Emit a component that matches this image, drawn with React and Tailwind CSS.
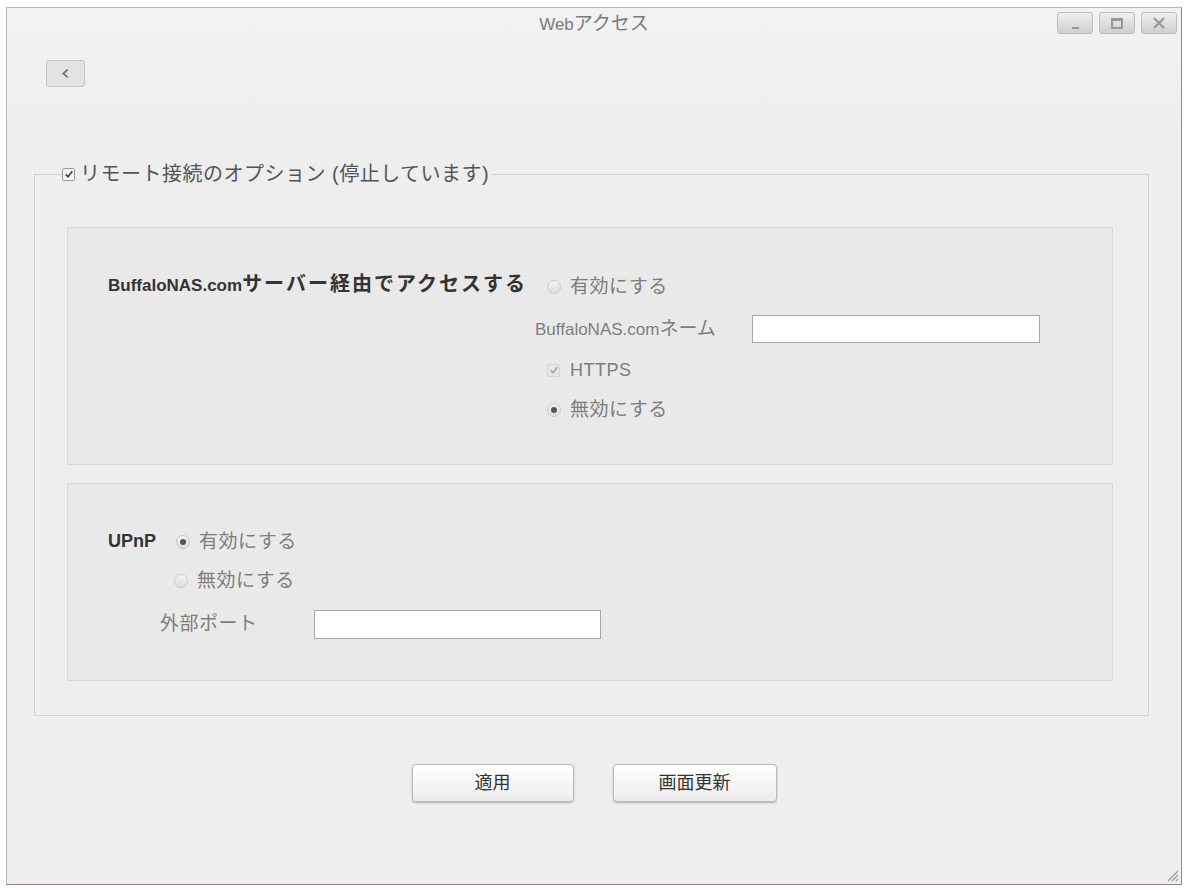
const font = { fontFamily: '"Liberation Sans", "Noto Sans CJK JP", sans-serif' };

const Radio = ({ checked }) => (
  <span className="inline-flex h-[14px] w-[14px] shrink-0 items-center justify-center rounded-full border border-[#c9c9c9] bg-gradient-to-b from-[#f4f4f4] to-[#dcdcdc]">
    {checked && <span className="h-[6px] w-[6px] rounded-full bg-[#555]" />}
  </span>
);

const Check = ({ dim }) => (
  <span
    className={`inline-flex h-[13px] w-[13px] shrink-0 items-center justify-center rounded-[2px] border ${
      dim ? "border-[#d6d6d6] bg-[#e6e6e6]" : "border-[#9a9a9a] bg-[#f4f4f4]"
    }`}
  >
    <svg viewBox="0 0 12 12" className="h-[10px] w-[10px]">
      <path
        d="M2 6.5 L4.8 9.2 L10 2.8"
        fill="none"
        stroke={dim ? "#a5a5a5" : "#444"}
        strokeWidth="2"
      />
    </svg>
  </span>
);

const WinBtn = ({ children }) => (
  <button className="flex h-[22px] w-[36px] items-center justify-center rounded-[3px] border border-[#bdbdbd] bg-gradient-to-b from-[#efefef] to-[#cfcfcf]">
    {children}
  </button>
);

// 選択肢の行 (ラジオ / チェック + 文字)
const Opt = ({ icon, children }) => (
  <div className="flex h-[26px] items-center">
    <span className="flex w-[23px] items-center">{icon}</span>
    <span className="text-[19px] leading-[26px] tracking-[0.5px]">{children}</span>
  </div>
);

export default function App() {
  return (
    <div className="min-h-screen bg-white pl-[6px] pt-[7px]" style={font}>
      <div className="relative flex h-[878px] w-[1176px] flex-col border border-[#b8b8b8] border-r-[#9b8585] border-b-[#9b7f7f] bg-[#eeeeee]">
        {/* header */}
        <div className="relative h-[115px] bg-gradient-to-b from-[#f2f2f2] to-[#efefef]">
          <div className="pt-[3px] text-center leading-[26px] text-[#7a7a7a]">
            <span className="text-[17px]">Web</span>
            <span className="text-[19px]">アクセス</span>
          </div>
          <div className="absolute right-[4px] top-[4px] flex gap-[6px]">
            <WinBtn>
              <span className="mt-[9px] h-[2px] w-[7px] bg-[#999]" />
            </WinBtn>
            <WinBtn>
              <span className="h-[11px] w-[12px] border-2 border-t-[3px] border-[#999]" />
            </WinBtn>
            <WinBtn>
              <svg viewBox="0 0 14 14" className="h-[14px] w-[14px]">
                <path d="M2 2 L12 12 M12 2 L2 12" stroke="#999" strokeWidth="2.4" />
              </svg>
            </WinBtn>
          </div>
          <button className="ml-[39px] mt-[22px] flex h-[27px] w-[39px] items-center justify-center rounded-[3px] border border-[#c4c4c4] bg-[#e3e3e3]">
            <svg viewBox="0 0 10 10" className="h-[11px] w-[11px]">
              <path d="M7 1.5 L3 5 L7 8.5" fill="none" stroke="#777" strokeWidth="1.6" />
            </svg>
          </button>
        </div>

        {/* remote options */}
        <fieldset className="ml-[27px] mr-[32px] mt-[38px] border border-[#d2d2d2] pb-[34px] pl-[32px] pr-[35px] pt-[40px]">
          <legend className="-ml-[5px] flex h-[26px] items-center gap-[5px] pr-[3px] text-[#555]">
            <Check />
            <span className="text-[20px] leading-[26px] tracking-[0.5px]">
              リモート接続のオプション (停止しています)
            </span>
          </legend>

          <div className="flex h-[238px] border border-[#d8d8d8] bg-[#e9e9e9] pl-[40px] pt-[43px] text-[#7d7d7d]">
            <div className="h-[26px] w-[427px] whitespace-nowrap font-bold leading-[26px] text-[#333]">
              <span className="text-[17px]">BuffaloNAS.com</span>
              <span className="text-[20px] tracking-[2px]">サーバー経由でアクセスする</span>
            </div>
            <div className="flex flex-col pt-[3px]">
              <div className="ml-[12px]">
                <Opt icon={<Radio />}>有効にする</Opt>
              </div>
              <div className="mt-[15px] flex h-[28px] items-center">
                <span className="w-[217px] whitespace-nowrap">
                  <span className="text-[17px]">BuffaloNAS.com</span>
                  <span className="text-[19px]">ネーム</span>
                </span>
                <input className="h-[28px] w-[288px] border border-[#a8a8a8] bg-white outline-none" />
              </div>
              <div className="ml-[12px] mt-[14px]">
                <Opt icon={<Check dim />}>
                  <span className="text-[18px]">HTTPS</span>
                </Opt>
              </div>
              <div className="ml-[12px] mt-[14px]">
                <Opt icon={<Radio checked />}>無効にする</Opt>
              </div>
            </div>
          </div>

          <div className="mt-[18px] h-[198px] border border-[#d8d8d8] bg-[#e9e9e9] pl-[40px] pt-[44px] text-[#7d7d7d]">
            <div className="flex">
              <span className="h-[26px] text-[18px] font-bold leading-[26px] text-[#333]">UPnP</span>
              <div className="ml-[20px] flex flex-col pt-[1px]">
                <Opt icon={<Radio checked />}>有効にする</Opt>
                <div className="-ml-[2px] mt-[13px]">
                  <Opt icon={<Radio />}>無効にする</Opt>
                </div>
              </div>
            </div>
            <div className="ml-[52px] mt-[16px] flex h-[29px] items-center">
              <span className="w-[154px] text-[19px] tracking-[0.5px]">外部ポート</span>
              <input className="h-[29px] w-[287px] border border-[#a8a8a8] bg-white outline-none" />
            </div>
          </div>
        </fieldset>

        {/* actions */}
        <div className="mt-[48px] flex justify-center gap-[39px]">
          <button className="h-[38px] w-[162px] rounded-[4px] border border-[#b9b9b9] bg-gradient-to-b from-white to-[#ececec] text-[18px] text-[#333] shadow-[0_1px_2px_rgba(0,0,0,0.25)]">
            適用
          </button>
          <button className="h-[38px] w-[164px] rounded-[4px] border border-[#b9b9b9] bg-gradient-to-b from-white to-[#ececec] text-[18px] text-[#333] shadow-[0_1px_2px_rgba(0,0,0,0.25)]">
            画面更新
          </button>
        </div>

        {/* resize grip */}
        <svg viewBox="0 0 16 16" className="absolute bottom-[2px] right-[2px] h-[16px] w-[16px]">
          <path d="M15 5 L5 15 M15 9 L9 15 M15 13 L13 15" stroke="#999" strokeWidth="1.2" />
        </svg>
      </div>
    </div>
  );
}
